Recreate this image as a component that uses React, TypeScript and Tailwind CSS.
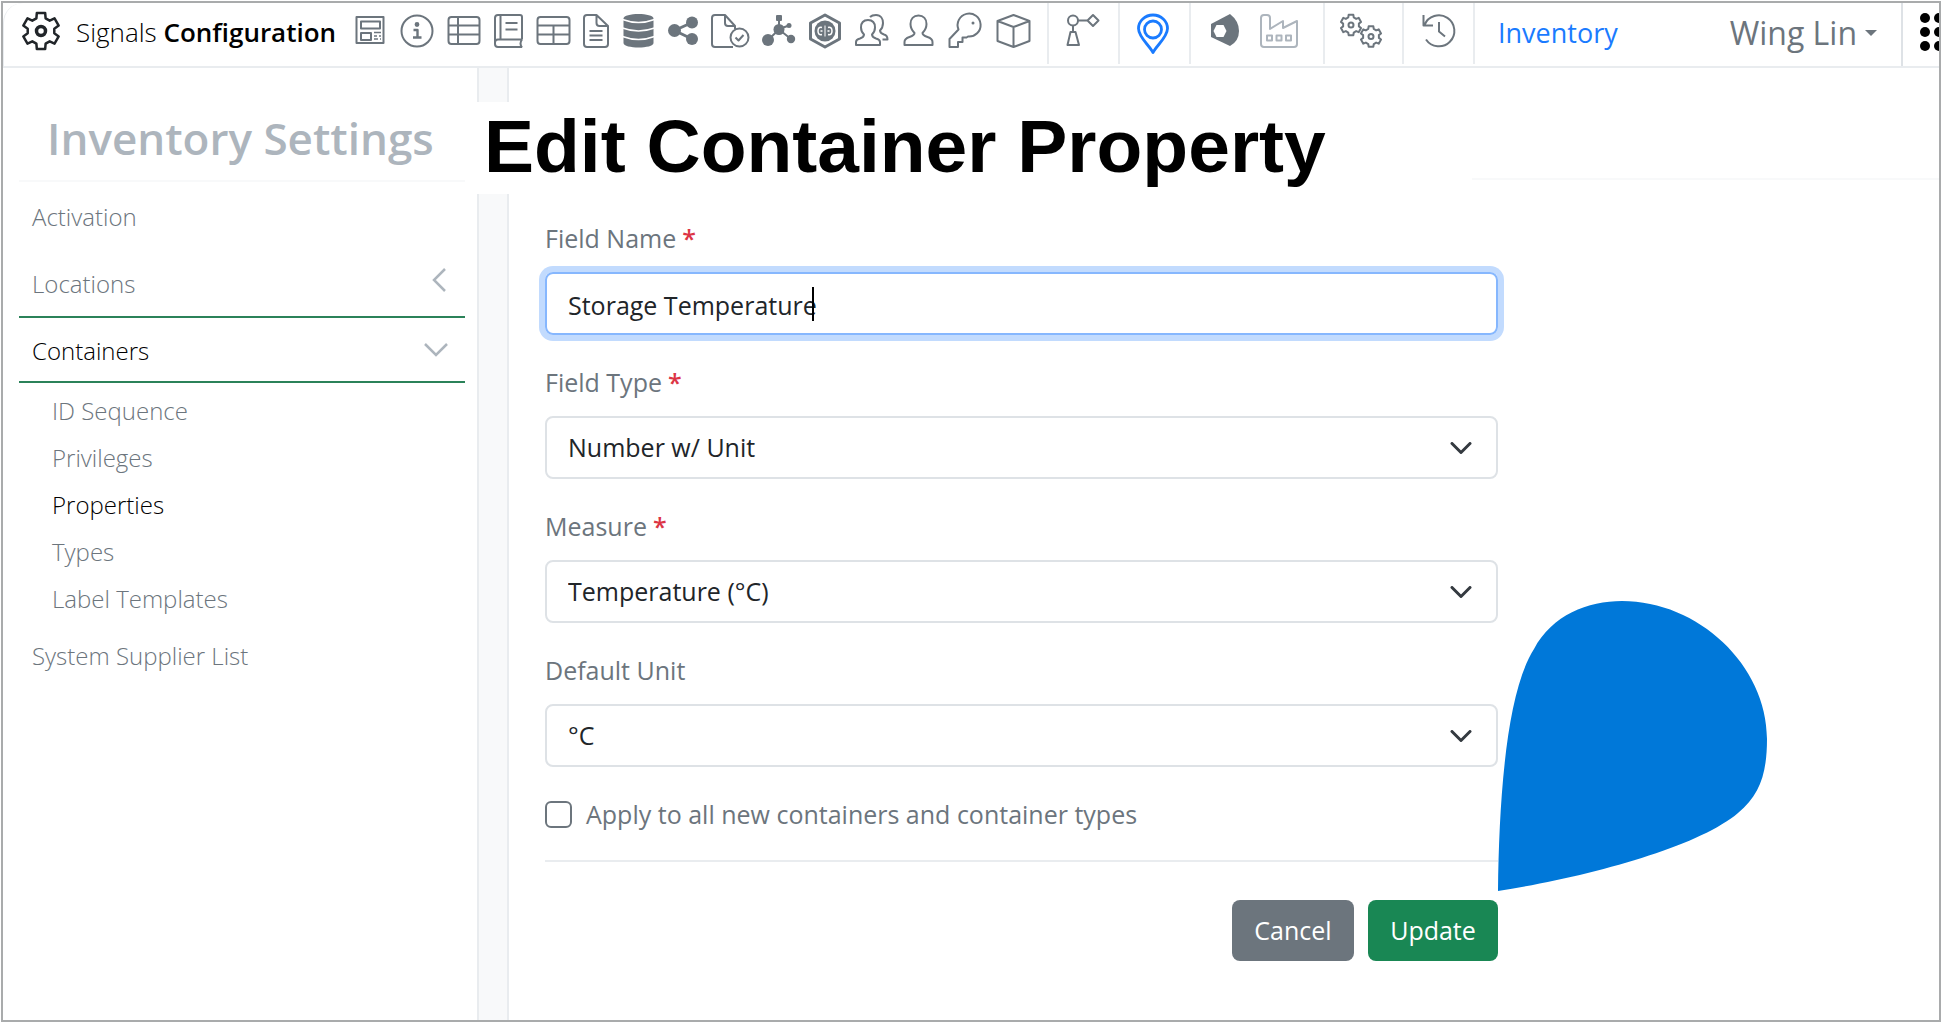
import { useState } from 'react';
import type { ReactNode } from 'react';

type IconProps = { w: number; label: string; className?: string; children: ReactNode };

const Icon = ({ w, label, className = '', children }: IconProps) => (
  <a href="#" aria-label={label} className={`shrink-0 ${className}`}>
    <svg
      width={w}
      height="40"
      viewBox={`0 0 ${w} 40`}
      className="block overflow-visible"
      fill="none"
      stroke="currentColor"
      strokeWidth="2"
      strokeLinejoin="round"
    >
      {children}
    </svg>
  </a>
);

const gear = (cx: number, cy: number, outer: number, inner: number) => {
  const points: string[] = [];
  for (let i = 0; i < 6; i++) {
    const steps = [
      [-20, inner],
      [-13, outer],
      [13, outer],
      [20, inner],
    ];
    steps.forEach(([offset, r]) => {
      const a = ((i * 60 - 90 + offset) * Math.PI) / 180;
      points.push(`${(cx + r * Math.cos(a)).toFixed(2)} ${(cy + r * Math.sin(a)).toFixed(2)}`);
    });
  }
  return `M${points.join('L')}Z`;
};

const Separated = ({ children }: { children: ReactNode }) => (
  <div className="flex h-[61px] shrink-0 items-center gap-3 border-l-2 border-[#e9ecef] px-[17px] pb-[5px]">
    {children}
  </div>
);

const Header = () => (
  <header className="flex h-[65px] items-start overflow-hidden border-b-2 border-[#e9ecef] text-[#6c757d]">
    <a href="#" className="flex h-[61px] w-[350px] shrink-0 items-center pl-4 pb-[5px] text-black">
      <svg width="42" height="40" viewBox="0 0 42 40" fill="none" stroke="#212529" strokeWidth="2.5" strokeLinejoin="round">
        <path d={gear(21, 20, 18.5, 13.5)} />
        <circle cx="21" cy="20" r="4.5" strokeWidth="3.5" />
      </svg>
      <span className="pt-0.5 pl-3.5 text-[26px] leading-8 whitespace-nowrap">
        <span className="font-light">Signals</span> <span className="font-semibold">Configuration</span>
      </span>
    </a>

    <nav className="flex shrink-0" aria-label="Configuration areas">
      <div className="flex h-[61px] items-center gap-3 pr-[15px] pb-[5px]">
        <Icon w={32} label="Templates">
          <path d="M2.5 6h27v26h-27z" />
          <path d="M7 10.5h19v7h-19zM7 22h10v7h-10z" />
          <path d="M20 21.5h7M20 25h3M25 25h2M20 28h4M26 28h1" strokeWidth="1.5" />
        </Icon>
        <Icon w={37} label="Information">
          <circle cx="19" cy="20" r="15.5" />
          <circle cx="19" cy="13.5" r="1.4" fill="currentColor" />
          <path d="M15.5 19h4v7.5M15 26.5h8.5" strokeWidth="2.4" />
        </Icon>
        <Icon w={34} label="Tables">
          <rect x="1.5" y="6" width="31" height="27" rx="3" />
          <path d="M1.5 14.5h31M1.5 23.5h31M11 6v27" />
        </Icon>
        <Icon w={31} label="Notebooks">
          <path d="M29 28.5V6q0-2-2-2H5Q2 4 2 7v26q0 3 3 3h24M29 28.5H5q-3 0-3 3M7.5 4v24M29 28.5q-3 4 0 8" />
          <path d="M12.5 12h12M12.5 18.5h12" />
        </Icon>
        <Icon w={35} label="Grids">
          <rect x="1.5" y="6" width="32" height="27" rx="3" />
          <path d="M1.5 14.5h32M1.5 23.5h32M17.5 14.5V33" />
        </Icon>
        <Icon w={26} label="Documents">
          <path d="M13.5 4H4Q1 4 1 7v26q0 3 3 3h18q3 0 3-3V15zM13.5 4v8q0 3 3 3H25" />
          <path d="M6.5 20h13M6.5 24.5h13M6.5 29h13" />
        </Icon>
        <Icon w={34} label="Data sources">
          <path
            d="M2.5 7.5C2.5 1.5 32.5 1.5 32.5 7.5V32C32.5 38 2.5 38 2.5 32z"
            fill="currentColor"
            stroke="none"
          />
          <path d="M1.5 8.5Q17.5 14.5 33.5 8.5M1.5 17Q17.5 23 33.5 17M1.5 25.5Q17.5 31.5 33.5 25.5" stroke="#fff" strokeWidth="1.5" />
        </Icon>
        <Icon w={32} label="Sharing">
          <g fill="currentColor" stroke="none">
            <circle cx="7.5" cy="19.5" r="6.5" />
            <circle cx="25" cy="11.5" r="6" />
            <circle cx="25" cy="28" r="6" />
          </g>
          <path d="M25 11.5L7.5 19.5L25 28" strokeWidth="3" />
        </Icon>
        <Icon w={39} label="Approvals">
          <path d="M22 36H4q-3 0-3-3V7q0-3 3-3h10l10 11v3M14 4v8q0 3 3 3h7" />
          <circle cx="28.5" cy="26.5" r="9" />
          <path d="M24.5 26.5l3 3l5-5.5" />
        </Icon>
        <Icon w={34} label="Materials">
          <g fill="currentColor" stroke="none">
            <circle cx="17" cy="18.5" r="5.5" />
            <rect x="14" y="4" width="6" height="6" rx="1" />
            <circle cx="27" cy="14.5" r="2.5" />
            <circle cx="29" cy="28" r="4.2" />
            <circle cx="6" cy="29" r="6" />
          </g>
          <path d="M17 8v10l10-3.5M6 29l11-10.5L29 28" />
        </Icon>
        <Icon w={34} label="Ontologies">
          <path d="M17 4l14.5 8v16L17 36L2.5 28V12z" strokeWidth="3" />
          <circle cx="17" cy="20" r="10.5" fill="currentColor" stroke="none" />
          <path d="M14 16.5q-4-1-4 3.5t4 3.5M20 16.5q4-1 4 3.5t-4 3.5M14.5 20h-2M19.5 20h2" stroke="#fff" strokeWidth="1.5" />
          <path d="M17 14.5v11" stroke="#fff" strokeWidth="1" />
        </Icon>
        <Icon w={36} label="Groups">
          <path d="M2 34v-3c0-2 2-3 4-3.5c3-1 4-2 4-4c-2-2-3-4-3-7c0-5 3-7.5 7-7.5s7 2.5 7 7.5c0 3-1 5-3 7c0 2 1 3 4 4c2 .5 4 1.5 4 3.5v3z" />
          <path d="M16 6c2-2 4-2 6-2c5 0 7 4 7 8c0 3-1 5.5-3 7.5c0 2 1 3 4 4c2 .5 3.5 1.5 3.5 5h-5" />
        </Icon>
        <Icon w={34} label="Users">
          <path d="M2.5 34v-3c0-3 2-4 5-5c3-1 5-2 5-4c-3-3-4-6-4-9c0-5 3-8.5 8-8.5s8 3.5 8 8.5c0 3-1 6-4 9c0 2 2 3 5 4c3 1 5 2 5 5v3z" />
        </Icon>
        <Icon w={36} label="Permissions">
          <path d="M10.5 18.5L1.5 28v8h8.5v-5h4.5v-4.5h4L20 25.5A11.5 11.5 0 1 0 10.5 18.5z" />
          <circle cx="25" cy="12" r="1.5" fill="currentColor" stroke="none" />
        </Icon>
        <Icon w={36} label="Products">
          <path d="M17.500 4l16 6v20l-16 6l-16-6V10zM1.5 10l16 6l16-6M17.5 16v20" />
        </Icon>
      </div>
      <Separated>
        <Icon w={35} label="Automation">
          <circle cx="7" cy="9.5" r="5" />
          <path d="M12 9.5h9M7 14.5V21M4.5 21h5l3.5 13H1.5zM27 4l5.5 5.5L27 15l-5.5-5.5z" />
        </Icon>
      </Separated>
      <Separated>
        <Icon w={35} label="Inventory" className="text-[#1a7bff]">
          <g strokeWidth="2.8">
            <path d="M16 41.5C12 34 1.5 26 1.5 17.5a14.5 13.5 0 0 1 29 0C30.5 26 20 34 16 41.5z" />
            <circle cx="16" cy="18.5" r="8.5" />
          </g>
        </Icon>
      </Separated>
      <Separated>
        <Icon w={38} label="Apps">
          <path d="M3 13L22 3q9 7 9 17t-9 15L3 26z" fill="currentColor" stroke="none" />
          <path d="M8.5 14h7l3 6l-3 6h-7l-3-6z" fill="#fff" stroke="none" />
        </Icon>
        <Icon w={48} label="Manufacturing" className="text-[#adb5bd]">
          <path d="M3 7q0-3 3-3h3q3 0 3 3v11l13-8v7l14-7v23q0 3-3 3H6q-3 0-3-3z" />
          <path d="M9 24.5h5v5H9zM18.5 24.5h5v5h-5zM28 24.5h5v5h-5z" />
        </Icon>
      </Separated>
      <Separated>
        <Icon w={43} label="System settings">
          <path d={gear(9, 14, 10.5, 8)} />
          <circle cx="9" cy="14" r="2.5" />
          <path d={gear(29, 25.5, 10.5, 8)} />
          <circle cx="29" cy="25.5" r="2.5" />
        </Icon>
      </Separated>
      <Separated>
        <Icon w={35} label="History">
          <path d="M2.5 4v10.5H12M3.5 14A15.5 15.5 0 1 1 5 28.5M18 11v9.5l6 5" />
        </Icon>
      </Separated>
    </nav>

    <div className="flex h-[61px] grow items-center border-l-2 border-[#e9ecef] pr-6 pl-[23px] pb-0.5">
      <a href="#" className="text-[27px] leading-8 text-[#1a7bff]">
        Inventory
      </a>
      <button type="button" className="ml-auto flex items-center gap-2 text-[32px] leading-9 font-medium whitespace-nowrap">
        Wing Lin
        <svg width="12" height="6" viewBox="0 0 12 6" fill="currentColor">
          <path d="M0 0h12L6 6z" />
        </svg>
      </button>
    </div>
    <button
      type="button"
      aria-label="App launcher"
      className="h-[63px] w-[38px] shrink-0 overflow-hidden border-l-2 border-[#dee2e6] pl-[17px] text-black"
    >
      <svg width="38" height="40" viewBox="0 0 38 40" fill="currentColor" className="-mt-1.5 max-w-none">
        {[5, 19, 33].map((x) => [6, 20, 34].map((y) => <circle key={`${x}-${y}`} cx={x} cy={y} r="5" />))}
      </svg>
    </button>
  </header>
);

const subItems = ['ID Sequence', 'Privileges', 'Properties', 'Types', 'Label Templates'];

const Sidebar = () => (
  <aside className="w-[476px] shrink-0 border-r-2 border-[#e9ecef] pr-3 pl-4 text-[24px] leading-[34px] font-light text-[#6c757d]">
    <h2 className="border-b-2 border-[#f8f9fa] pt-10 pb-3 pl-7 text-[44px] leading-[60px] font-semibold whitespace-nowrap text-[#adb5bd]">
      Inventory Settings
    </h2>
    <nav aria-label="Inventory settings">
      <a href="#" className="flex h-[68px] items-center px-[13px] pt-0.5">
        Activation
      </a>
      <a href="#" className="flex h-[68px] items-center justify-between border-b-2 border-[#2b8259] px-[13px] pt-0.5">
        Locations
        <svg width="24" height="24" viewBox="0 0 24 24" fill="none" stroke="#adb5bd" strokeWidth="2.5" className="-mt-2">
          <path d="M17 1L6 12l11 11" />
        </svg>
      </a>
      <a href="#" className="flex h-[65px] items-center justify-between border-b-2 border-[#2b8259] px-[13px] pt-0.5 text-black">
        Containers
        <svg width="32" height="24" viewBox="0 0 32 24" fill="none" stroke="#adb5bd" strokeWidth="2.5" className="-mt-1">
          <path d="M5 7l11 11L27 7" />
        </svg>
      </a>
      <ul className="pt-1 pl-[33px]">
        {subItems.map((item) => (
          <li key={item}>
            <a
              href="#"
              className={
                item === 'Properties' ? 'flex h-[47px] items-center text-black' : 'flex h-[47px] items-center'
              }
            >
              {item}
            </a>
          </li>
        ))}
      </ul>
      <a href="#" className="flex h-[68px] items-center px-[13px]">
        System Supplier List
      </a>
    </nav>
  </aside>
);

type FieldProps = { id: string; label: string; required?: boolean; children: ReactNode };

const Field = ({ id, label, required, children }: FieldProps) => (
  <div className="h-36">
    <label htmlFor={id} className="flex h-[52px] items-start gap-1.5 leading-[36px]">
      {label}
      {required && <span className="font-semibold text-[#dc3545]">*</span>}
    </label>
    <div className="relative">{children}</div>
  </div>
);

const SelectField = ({ options, ...field }: { id: string; label: string; required?: boolean; options: string[] }) => (
  <Field {...field}>
    <select
      id={field.id}
      className="h-[63px] w-full appearance-none rounded-lg border-2 border-[#dee2e6] bg-white px-[21px] text-[#212529]"
    >
      {options.map((option) => (
        <option key={option}>{option}</option>
      ))}
    </select>
    <svg
      width="22"
      height="12"
      viewBox="0 0 22 12"
      fill="none"
      stroke="#343a40"
      strokeWidth="3"
      strokeLinecap="round"
      strokeLinejoin="round"
      className="pointer-events-none absolute top-[26px] right-[26px]"
    >
      <path d="M2 1.5l9 9l9-9" />
    </svg>
  </Field>
);

const PropertyForm = () => {
  const [name, setName] = useState('Storage Temperature');

  return (
    <form className="relative mt-[26px] ml-9 w-full max-w-[953px] text-[25px] text-[#6c757d]">
      <Field id="field-name" label="Field Name" required>
        <input
          id="field-name"
          type="text"
          value={name}
          onChange={(e) => setName(e.target.value)}
          className="h-[63px] w-full rounded-lg border-2 border-[#86b7fe] px-[21px] pt-0.5 text-[#212529] caret-transparent ring-6 ring-[#c2dbfe] outline-none"
        />
        {/* caret sits right behind the typed text */}
        <div className="pointer-events-none absolute inset-y-0 left-[21px] flex items-center" aria-hidden="true">
          <div className="ml-[246px] h-[34px] w-0.5 bg-black" />
        </div>
      </Field>
      <SelectField id="field-type" label="Field Type" required options={['Number w/ Unit', 'Number', 'Text']} />
      <SelectField id="measure" label="Measure" required options={['Temperature (°C)']} />
      <SelectField id="default-unit" label="Default Unit" options={['°C', '°F', 'K']} />

      <label className="flex items-center gap-[14px] leading-[36px]">
        <input type="checkbox" className="size-[27px] appearance-none rounded-md border-2 border-[#6c757d]" />
        Apply to all new containers and container types
      </label>

      <div className="mt-7 flex justify-end gap-[14px] border-t-2 border-[#e9ecef] pt-[38px] text-white">
        <button type="button" className="h-[61px] w-[122px] rounded-lg bg-[#6c757d]">
          Cancel
        </button>
        <button type="submit" className="h-[61px] w-[130px] rounded-lg bg-[#198754]">
          Update
        </button>
      </div>

      {/* callout pointing at the Update button */}
      <svg width="269" height="290" viewBox="0 0 269 290" className="absolute bottom-[70px] left-full" aria-hidden="true">
        <path
          d="M0 290C1 200 8 92 36 48C54 14 90 0 124 0C200 0 269 64 269 138C269 172 262 194 240 212C200 246 90 276 0 290z"
          fill="#0078d9"
        />
      </svg>
    </form>
  );
};

const App = () => (
  <div className="flex min-h-screen bg-white p-px font-['Open_Sans','Noto_Sans',sans-serif]">
    <div className="flex min-w-0 grow flex-col overflow-hidden border-2 border-[#a9abac]">
      <div className="flex grow flex-col rounded-tl-[20px] border-l border-[#e9ecef]">
        <Header />
        <div className="-ml-px flex grow bg-[#f8f9fa]">
          <div className="flex bg-white">
            <Sidebar />
          </div>
          <main className="ml-7 min-w-0 grow border-l-2 border-[#e9ecef] bg-white">
            <div className="flex items-start pt-[34px]">
              <h1 className="-ml-[34px] shrink-0 bg-white pr-[146px] pb-1 pl-[9px] font-['Liberation_Sans',Arial,sans-serif] text-[75px] leading-[88px] font-bold whitespace-nowrap text-black">
                Edit Container Property
              </h1>
              <div className="h-[78px] grow border-b-2 border-[#f8f9fa]" />
            </div>
            <PropertyForm />
          </main>
        </div>
      </div>
    </div>
  </div>
);

export default App;
